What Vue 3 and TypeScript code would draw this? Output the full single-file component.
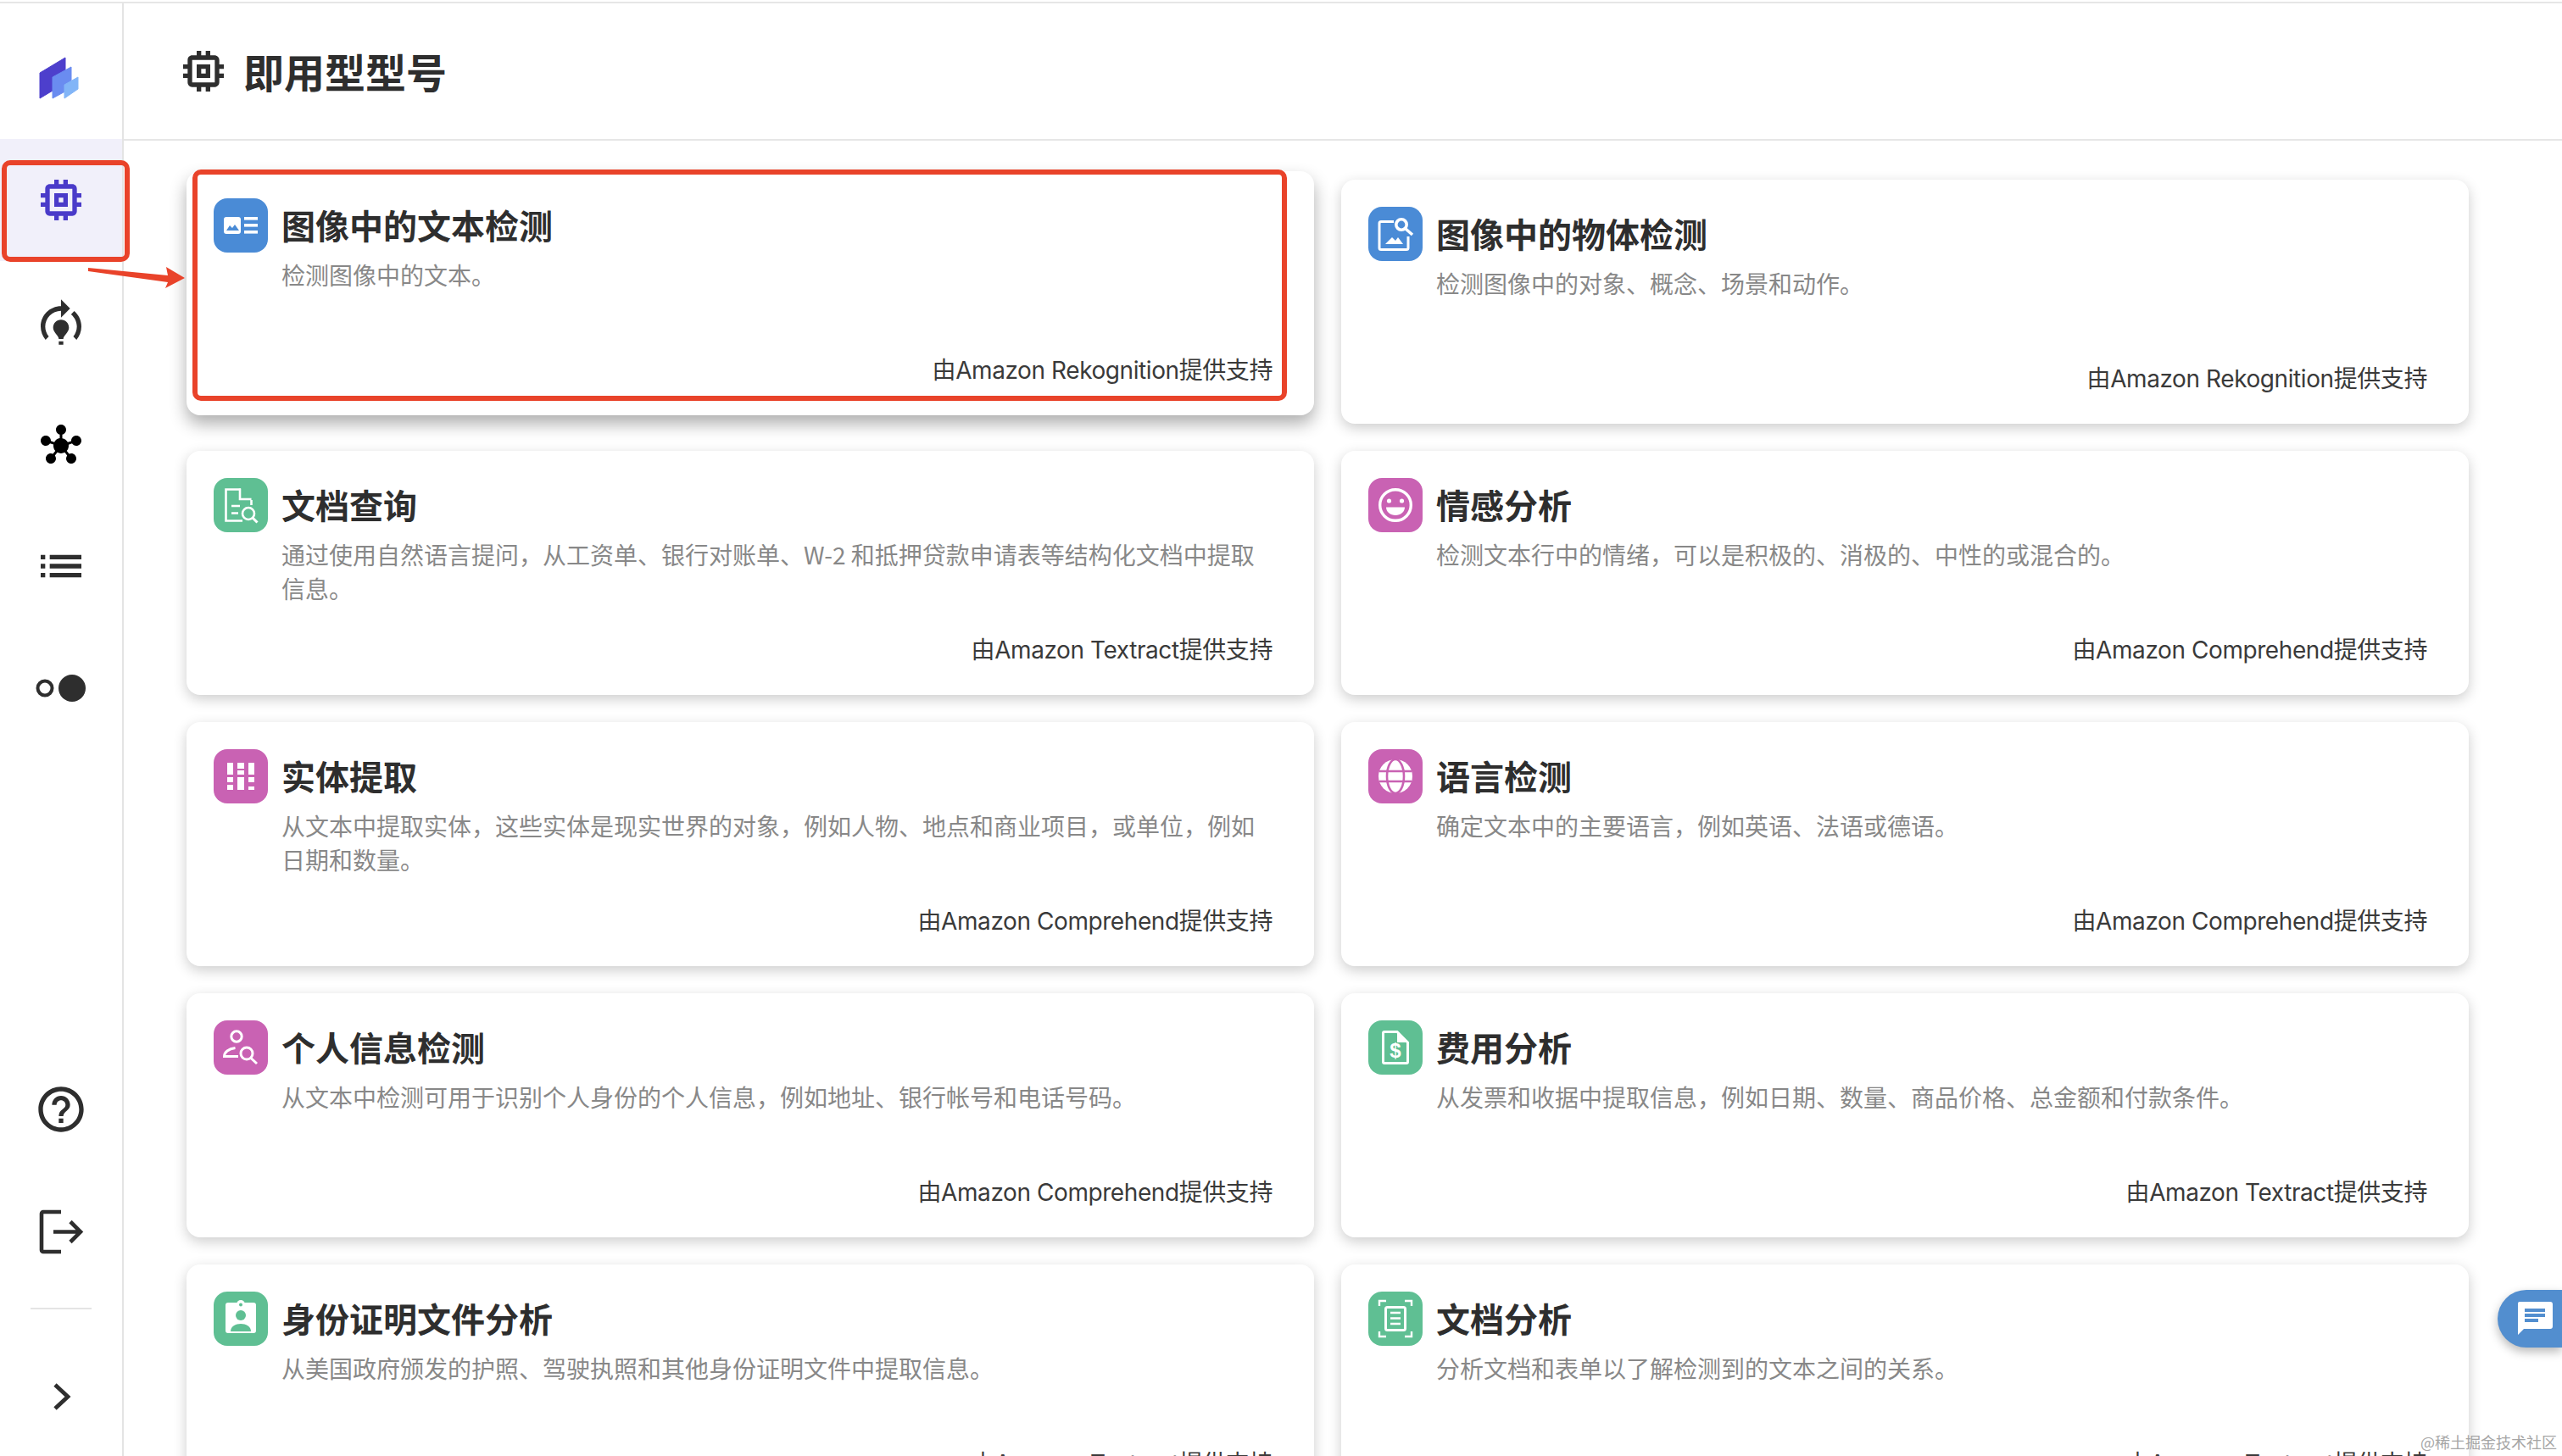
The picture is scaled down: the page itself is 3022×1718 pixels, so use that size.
<script setup lang="ts">
interface Model {
  title: string;
  desc: string;
  by: string;
  color: string;
  icon: string;
}

const BLUE = "#4a8bd6";
const GREEN = "#5fbf93";
const PINK = "#c962b3";

const models: Model[] = [
  { title: "图像中的文本检测", desc: "检测图像中的文本。", by: "由Amazon Rekognition提供支持", color: BLUE, icon: "text" },
  { title: "图像中的物体检测", desc: "检测图像中的对象、概念、场景和动作。", by: "由Amazon Rekognition提供支持", color: BLUE, icon: "object" },
  { title: "文档查询", desc: "通过使用自然语言提问，从工资单、银行对账单、W-2 和抵押贷款申请表等结构化文档中提取信息。", by: "由Amazon Textract提供支持", color: GREEN, icon: "query" },
  { title: "情感分析", desc: "检测文本行中的情绪，可以是积极的、消极的、中性的或混合的。", by: "由Amazon Comprehend提供支持", color: PINK, icon: "smile" },
  { title: "实体提取", desc: "从文本中提取实体，这些实体是现实世界的对象，例如人物、地点和商业项目，或单位，例如日期和数量。", by: "由Amazon Comprehend提供支持", color: PINK, icon: "entity" },
  { title: "语言检测", desc: "确定文本中的主要语言，例如英语、法语或德语。", by: "由Amazon Comprehend提供支持", color: PINK, icon: "globe" },
  { title: "个人信息检测", desc: "从文本中检测可用于识别个人身份的个人信息，例如地址、银行帐号和电话号码。", by: "由Amazon Comprehend提供支持", color: PINK, icon: "person" },
  { title: "费用分析", desc: "从发票和收据中提取信息，例如日期、数量、商品价格、总金额和付款条件。", by: "由Amazon Textract提供支持", color: GREEN, icon: "expense" },
  { title: "身份证明文件分析", desc: "从美国政府颁发的护照、驾驶执照和其他身份证明文件中提取信息。", by: "由Amazon Textract提供支持", color: GREEN, icon: "id" },
  { title: "文档分析", desc: "分析文档和表单以了解检测到的文本之间的关系。", by: "由Amazon Textract提供支持", color: GREEN, icon: "scan" },
];

const CHIP =
  "M15 9H9v6h6V9zm-2 4h-2v-2h2v2zm8-2V9h-2V7c0-1.1-.9-2-2-2h-2V3h-2v2h-2V3H9v2H7c-1.1 0-2 .9-2 2v2H3v2h2v2H3v2h2v2c0 1.1.9 2 2 2h2v2h2v-2h2v2h2v-2h2c1.1 0 2-.9 2-2v-2h2v-2h-2v-2h2zm-4 6H7V7h10v10z";
</script>

<template>
  <div class="page">
    <div class="frame">
      <aside class="sidebar">
        <div class="logo">
          <svg width="64" height="64" viewBox="0 0 64 64">
            <path d="M7 26 37 8v30L7 56z" fill="#4d3fcc" stroke="#4d3fcc" stroke-linejoin="round" />
            <path d="M22 31 44 19v25L22 56z" fill="#6a8cf0" stroke="#6a8cf0" stroke-linejoin="round" />
            <path d="M36 40 52 31v14L36 56z" fill="#82b5f7" stroke="#82b5f7" stroke-linejoin="round" />
          </svg>
        </div>
        <nav class="nav">
          <div class="nav-item active">
            <svg width="64" height="64" viewBox="0 0 24 24" fill="#4a3bc9"><path :d="CHIP" /></svg>
          </div>
          <div class="nav-item">
            <svg width="64" height="64" viewBox="0 -1 24 24" fill="#2e2e2e">
              <path d="M15.5 13.5c0 2-2.5 3.5-2.5 5h-2c0-1.5-2.5-3-2.5-5 0-1.93 1.57-3.5 3.5-3.5s3.5 1.57 3.5 3.5zM13 19.5h-2V21h2v-1.5zM19 13c0 1.68-.59 3.21-1.58 4.42l1.42 1.42C20.18 17.27 21 15.23 21 13c0-2.74-1.23-5.19-3.16-6.84l-1.42 1.42C17.99 8.86 19 10.82 19 13zM16 5l-4-4v3c-4.97 0-9 4.03-9 9 0 2.23.82 4.27 2.16 5.84l1.42-1.42C5.59 16.21 5 14.68 5 13c0-3.86 3.14-7 7-7v3l4-4z" />
            </svg>
          </div>
          <div class="nav-item">
            <svg width="48" height="48" viewBox="0 -0.5 24 24" fill="#000">
              <path d="M8.4 18.2c.38.5.6 1.12.6 1.8 0 1.66-1.34 3-3 3s-3-1.34-3-3 1.34-3 3-3c.44 0 .85.09 1.23.26l1.41-1.77c-.92-1.03-1.29-2.39-1.09-3.69l-2.03-.68c-.54.81-1.46 1.34-2.52 1.34-1.66 0-3-1.34-3-3s1.34-3 3-3 3 1.34 3 3c0 .07 0 .14-.01.21l2.03.68c.64-1.21 1.82-2.09 3.22-2.32V5.91C9.96 5.57 9 4.4 9 3c0-1.66 1.34-3 3-3s3 1.34 3 3c0 1.4-.96 2.57-2.25 2.91v2.16c1.4.23 2.58 1.11 3.22 2.32l2.03-.68C18 9.64 18 9.57 18 9.5c0-1.66 1.34-3 3-3s3 1.34 3 3-1.34 3-3 3c-1.06 0-1.98-.53-2.52-1.34l-2.03.68c.2 1.29-.16 2.65-1.09 3.69l1.41 1.77C17.15 17.09 17.56 17 18 17c1.66 0 3 1.34 3 3s-1.34 3-3 3-3-1.34-3-3c0-.68.22-1.3.6-1.8l-1.41-1.77c-1.35.75-3.01.76-4.37 0L8.4 18.2z" />
            </svg>
          </div>
          <div class="nav-item">
            <svg width="64" height="64" viewBox="0 0 24 24" fill="#2e2e2e">
              <path d="M3 13h2v-2H3v2zm0 4h2v-2H3v2zm0-8h2V7H3v2zm4 4h14v-2H7v2zm0 4h14v-2H7v2zM7 7v2h14V7H7z" />
            </svg>
          </div>
          <div class="nav-item">
            <svg width="64" height="40" viewBox="0 0 64 40">
              <circle cx="13" cy="20" r="8.5" fill="none" stroke="#2e2e2e" stroke-width="4" />
              <circle cx="45" cy="20" r="16" fill="#2e2e2e" />
            </svg>
          </div>
        </nav>
        <div class="nav-bottom">
          <div class="nav-item">
            <svg width="64" height="64" viewBox="0 0 24 24" fill="#2e2e2e">
              <path d="M11 18h2v-2h-2v2zm1-16C6.48 2 2 6.48 2 12s4.48 10 10 10 10-4.48 10-10S17.52 2 12 2zm0 18c-4.41 0-8-3.59-8-8s3.59-8 8-8 8 3.59 8 8-3.59 8-8 8zm0-14c-2.21 0-4 1.79-4 4h2c0-1.1.9-2 2-2s2 .9 2 2c0 2-3 1.75-3 5h2c0-2.25 3-2.5 3-5 0-2.21-1.79-4-4-4z" />
            </svg>
          </div>
          <div class="nav-item">
            <svg width="64" height="64" viewBox="0 0 64 64" fill="none" stroke="#2e2e2e" stroke-width="4.6">
              <path d="M32 9H11a2 2 0 0 0-2 2v43a2 2 0 0 0 2 2h21" />
              <path d="M23 32.500h30M43 20.500l12 12-12 12" />
            </svg>
          </div>
          <div class="divider"></div>
          <div class="expand">
            <svg width="64" height="64" viewBox="0 0 64 64" fill="none" stroke="#2e2e2e" stroke-width="4.8">
              <path d="M25 17l15 14-15 14" />
            </svg>
          </div>
        </div>
      </aside>

      <main class="main">
        <header class="header">
          <svg width="64" height="64" viewBox="0 0 24 24" fill="#2e2e2e"><path :d="CHIP" /></svg>
          <h1 class="page-title">即用型型号</h1>
        </header>
        <section class="grid">
          <article v-for="(m, i) in models" :key="m.title" class="card" :class="{ lifted: i === 0 }">
            <div class="card-top">
              <div class="card-icon" :style="{ background: m.color }">
                <svg width="64" height="64" viewBox="0 0 64 64">
                  <g v-if="m.icon === 'text'" fill="#fff">
                    <rect x="12" y="22" width="20" height="20" rx="3" />
                    <path d="M15 38l4-6 3 3 3-4 5 7z" :fill="m.color" />
                    <rect x="36" y="22" width="16" height="3.6" />
                    <rect x="36" y="30" width="16" height="3.6" />
                    <rect x="36" y="38" width="16" height="3.6" />
                  </g>
                  <g v-else-if="m.icon === 'object'" fill="none" stroke="#fff" stroke-width="3">
                    <path d="M30 17.5H15a2 2 0 0 0-2 2v29a2 2 0 0 0 2 2h30a2 2 0 0 0 2-2V35" />
                    <path d="M20 44l8-8 4 4 3-4 6 8z" fill="#fff" stroke="none" />
                    <circle cx="39" cy="21" r="6.2" stroke-width="3.6" />
                    <path d="M44 26l8 7" stroke-width="3.6" />
                  </g>
                  <g v-else-if="m.icon === 'query'" fill="none" stroke="#fff" stroke-width="2.6">
                    <path d="M32 13.5H14.5v37H34M44.5 26v6" />
                    <path d="M31 12.5v12.5h13.5" />
                    <path d="M21 33h10M21 41.5h8" stroke-width="2.6" />
                    <circle cx="41" cy="42" r="7" />
                    <path d="M46 47l5.5 5.500" stroke-width="3" />
                  </g>
                  <g v-else-if="m.icon === 'smile'">
                    <circle cx="32" cy="32" r="18.3" fill="none" stroke="#fff" stroke-width="3.4" />
                    <circle cx="24.5" cy="27" r="2.6" fill="#fff" />
                    <circle cx="39.5" cy="27" r="2.6" fill="#fff" />
                    <path d="M21 34.500h22c0 5.5-5 9.5-11 9.5s-11-4-11-9.5z" fill="#fff" />
                  </g>
                  <g v-else-if="m.icon === 'entity'" fill="#fff">
                    <rect x="16" y="16" width="7" height="14" />
                    <rect x="16" y="33" width="7" height="6" />
                    <rect x="16" y="42" width="7" height="6" />
                    <rect x="28" y="16" width="8" height="7" />
                    <rect x="28" y="25" width="8" height="5" />
                    <rect x="28" y="33" width="8" height="15" />
                    <rect x="41" y="16" width="7" height="14" />
                    <rect x="41" y="33" width="7" height="6" />
                    <rect x="41" y="44" width="7" height="4" />
                  </g>
                  <g v-else-if="m.icon === 'globe'">
                    <circle cx="32" cy="32" r="20" fill="#fff" />
                    <g fill="none" :stroke="m.color" stroke-width="2.6">
                      <ellipse cx="32" cy="32" rx="10" ry="20" />
                      <path d="M13 26h38M13 38h38" />
                    </g>
                  </g>
                  <g v-else-if="m.icon === 'person'" fill="none" stroke="#fff" stroke-width="3">
                    <circle cx="27" cy="19" r="6.2" />
                    <path d="M29 42.5H12.5c0-5 5-9 13-10" />
                    <circle cx="39" cy="39" r="7" />
                    <path d="M44 44.5l7 6.5" />
                  </g>
                  <g v-else-if="m.icon === 'expense'">
                    <path d="M34 13.5H19a1.5 1.5 0 0 0-1.5 1.5v34a1.5 1.5 0 0 0 1.5 1.5h26a1.5 1.5 0 0 0 1.5-1.5V26z" fill="none" stroke="#fff" stroke-width="3" />
                    <path d="M34 13v13h13z" fill="#fff" />
                    <text x="32" y="44" text-anchor="middle" fill="#fff" class="dollar">$</text>
                  </g>
                  <g v-else-if="m.icon === 'id'">
                    <rect x="14" y="13" width="36" height="36" rx="3" fill="#fff" />
                    <circle cx="32" cy="15" r="5" fill="#fff" />
                    <circle cx="32" cy="15.5" r="2" :fill="m.color" />
                    <circle cx="32" cy="28" r="6" :fill="m.color" />
                    <path d="M20 47c0-6 6-9 12-9s12 3 12 9z" :fill="m.color" />
                  </g>
                  <g v-else fill="none" stroke="#fff" stroke-width="2.4">
                    <path d="M13 17v-6h8M43 11h8v6M13 47v6h8M43 53h8v-6" />
                    <rect x="20.5" y="18.5" width="23" height="27" rx="2" stroke-width="3" />
                    <path d="M26 25h12M26 31.5h12M26 38h12" />
                  </g>
                </svg>
              </div>
              <div class="card-text">
                <h2 class="card-title">{{ m.title }}</h2>
                <p class="card-desc">{{ m.desc }}</p>
              </div>
            </div>
            <div class="card-by">{{ m.by }}</div>
          </article>
        </section>
      </main>
    </div>

    <!-- screenshot annotations and floating widgets -->
    <div class="mark mark-nav"></div>
    <div class="mark mark-card"></div>
    <svg class="mark-arrow" width="116" height="28" viewBox="0 0 116 28">
      <path d="M0 1 94 10 92 0l22 13-23 12 3-7L0 5z" fill="#e9432a" />
    </svg>
    <div class="chat">
      <svg width="48" height="48" viewBox="0 0 48 48">
        <path d="M8 4h36a3 3 0 0 1 3 3v26a3 3 0 0 1-3 3H13l-7 7V6a2 2 0 0 1 2-2z" fill="#fff" />
        <rect x="14" y="12" width="24" height="4" fill="#528ecf" />
        <rect x="14" y="18" width="24" height="4" fill="#528ecf" />
        <rect x="14" y="24" width="16" height="4" fill="#528ecf" />
      </svg>
    </div>
    <div class="watermark">@稀土掘金技术社区</div>
  </div>
</template>

<style scoped>
.page {
  position: relative;
  width: 3022px;
  height: 1718px;
  padding-top: 2px;
  box-sizing: border-box;
  overflow: hidden;
  background: #fff;
  font-family: "Noto Sans CJK SC", "Noto Sans", sans-serif;
  color: #2e2e2e;
}
.frame {
  display: flex;
  height: 1716px;
  box-sizing: border-box;
  border-top: 2px solid #e6e6e6;
}
.sidebar {
  display: flex;
  flex-direction: column;
  flex: none;
  width: 146px;
  box-sizing: border-box;
  border-right: 2px solid #e4e4e4;
}
.logo {
  flex: none;
  height: 160px;
  padding-top: 56px;
  box-sizing: border-box;
}
.logo svg {
  display: block;
  margin-left: 40px;
}
.nav {
  flex: 1;
}
.nav-item {
  display: flex;
  align-items: center;
  justify-content: center;
  height: 144px;
}
.nav-item.active {
  background: #f1f0fa;
}
.divider {
  height: 2px;
  margin: 18px 36px 0;
  background: #e4e4e4;
}
.expand {
  display: flex;
  align-items: center;
  justify-content: center;
  height: 173px;
  padding-top: 34px;
  box-sizing: border-box;
}
.main {
  flex: 1;
  min-width: 0;
}
.header {
  display: flex;
  align-items: center;
  gap: 15px;
  height: 162px;
  padding-left: 62px;
  box-sizing: border-box;
  border-bottom: 2px solid #e6e6e6;
}
.page-title {
  margin: 0 0 3px;
  font-size: 48px;
  line-height: 64px;
  font-weight: 700;
}
.grid {
  display: grid;
  grid-template-columns: 1330px 1330px;
  grid-auto-rows: 288px;
  gap: 32px;
  padding: 46px 0 0 74px;
}
.card {
  display: flex;
  flex-direction: column;
  justify-content: space-between;
  padding: 32px 49px 33px 32px;
  box-sizing: border-box;
  border-radius: 16px;
  background: #fff;
  box-shadow: 0 5px 16px rgba(0, 0, 0, 0.2);
}
.card.lifted {
  transform: translateY(-10px);
  box-shadow: 0 10px 20px rgba(0, 0, 0, 0.32);
}
.card-top {
  display: flex;
  gap: 16px;
}
.card-icon {
  flex: none;
  width: 64px;
  height: 64px;
  border-radius: 16px;
}
.card-icon svg {
  display: block;
}
.card-text {
  flex: 1;
  padding-top: 7px;
}
.card-title {
  margin: 0 0 15px;
  font-size: 40px;
  line-height: 48px;
  font-weight: 700;
  color: #2e2e2e;
}
.card-desc {
  margin: 0;
  font-size: 28px;
  line-height: 40px;
  color: #888;
}
.card-by {
  font-family: Inter, "Noto Sans CJK SC", sans-serif;
  font-size: 28px;
  line-height: 40px;
  letter-spacing: -0.42px;
  text-align: right;
  color: #3a3a3a;
}
.dollar {
  font-family: "Liberation Sans", sans-serif;
  font-size: 24px;
  font-weight: 700;
}
.mark {
  position: absolute;
  box-sizing: border-box;
  border: 6px solid #e9432a;
  border-radius: 10px;
}
.mark-nav {
  left: 2px;
  top: 189px;
  width: 151px;
  height: 120px;
}
.mark-card {
  left: 227px;
  top: 200px;
  width: 1291px;
  height: 273px;
}
.mark-arrow {
  position: absolute;
  left: 104px;
  top: 315px;
}
.chat {
  position: absolute;
  right: 0;
  top: 1522px;
  display: flex;
  align-items: center;
  justify-content: flex-start;
  width: 76px;
  height: 68px;
  padding-left: 18px;
  box-sizing: border-box;
  border-radius: 34px 0 0 34px;
  background: #528ecf;
  box-shadow: 0 5px 12px rgba(0, 0, 0, 0.28);
}
.watermark {
  position: absolute;
  right: 6px;
  top: 1689px;
  font-size: 18px;
  line-height: 24px;
  color: #a6a6a6;
}
</style>

<style>
html,
body {
  margin: 0;
  overflow: hidden;
  background: #fff;
}
</style>
